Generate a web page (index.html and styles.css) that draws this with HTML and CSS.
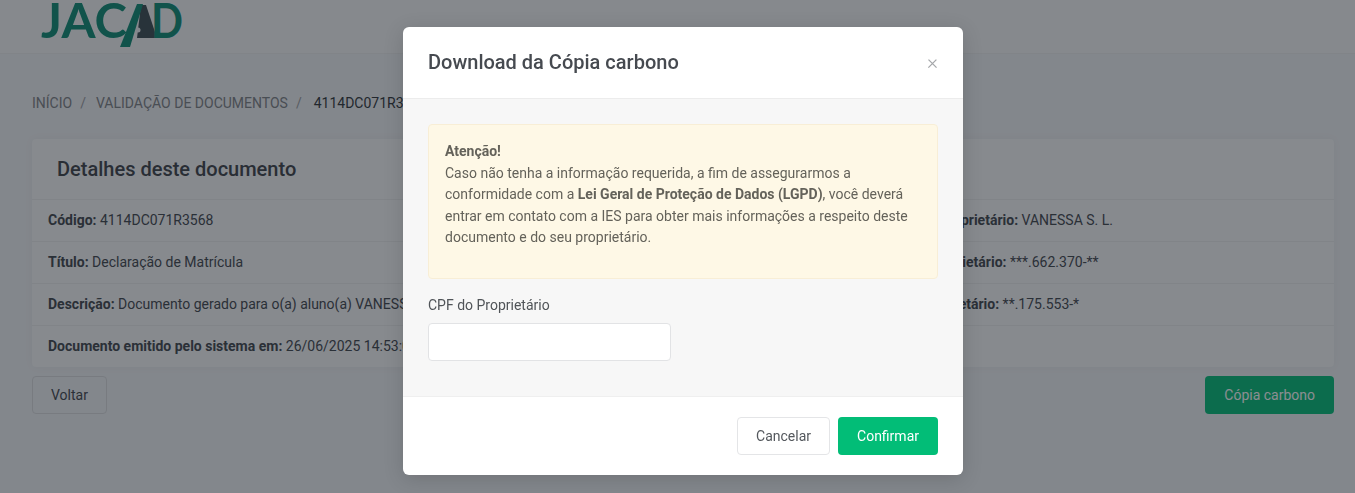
FILE: index.html
```html
<!DOCTYPE html>
<html lang="pt-BR">
<head>
    <meta charset="UTF-8">
    <meta name="viewport" content="width=device-width, initial-scale=1.0">
    <title>Validação de documentos</title>
    <link rel="stylesheet" href="styles.css">
</head>
<body>
    <header class="topbar">
        <svg class="logo" width="150" height="53" viewBox="0 0 150 53" role="img" aria-label="JACAD">
            <text class="logo-text" x="0" y="38" textLength="86" lengthAdjust="spacingAndGlyphs">JAC</text>
            <polygon class="logo-dark" points="100,5 105,5 116,38 96,38"/>
            <circle class="logo-dot" cx="97" cy="30" r="2.5"/>
            <polygon class="logo-green" points="96,4 102,4 89,47 79,47"/>
            <text class="logo-text" x="110" y="38" textLength="32" lengthAdjust="spacingAndGlyphs">D</text>
        </svg>
    </header>

    <main class="content">
        <nav class="breadcrumb">
            <a href="#">INÍCIO</a>
            <span class="sep">/</span>
            <a href="#">VALIDAÇÃO DE DOCUMENTOS</a>
            <span class="sep">/</span>
            <span class="current">4114DC071R3568</span>
        </nav>

        <section class="card">
            <h2 class="card-title">Detalhes deste documento</h2>
            <div class="row">
                <div><b>Código:</b> 4114DC071R3568</div>
                <div><b>Nome do proprietário:</b> VANESSA S. L.</div>
            </div>
            <div class="row">
                <div><b>Título:</b> Declaração de Matrícula</div>
                <div><b>CPF do proprietário:</b> ***.662.370-**</div>
            </div>
            <div class="row">
                <div><b>Descrição:</b> Documento gerado para o(a) aluno(a) VANESSA S. L.</div>
                <div><b>RG do proprietário:</b> **.175.553-*</div>
            </div>
            <div class="row">
                <div><b>Documento emitido pelo sistema em:</b> 26/06/2025 14:53:08</div>
            </div>
        </section>

        <div class="actions">
            <button class="btn btn-outline">Voltar</button>
            <button class="btn btn-dark-green">Cópia carbono</button>
        </div>
    </main>

    <div class="backdrop">
        <div class="modal">
            <div class="modal-header">
                <h3>Download da Cópia carbono</h3>
                <span class="close">&times;</span>
            </div>
            <div class="modal-body">
                <div class="alert">
                    <b>Atenção!</b><br>
                    Caso não tenha a informação requerida, a fim de assegurarmos a conformidade com a <b>Lei Geral de Proteção de Dados (LGPD)</b>, você deverá entrar em contato com a IES para obter mais informações a respeito deste documento e do seu proprietário.
                </div>
                <label class="field-label" for="cpf">CPF do Proprietário</label>
                <input class="field" type="text" id="cpf">
            </div>
            <div class="modal-footer">
                <button class="btn btn-cancel">Cancelar</button>
                <button class="btn btn-green">Confirmar</button>
            </div>
        </div>
    </div>
</body>
</html>
```

FILE: styles.css
```css
* {
    box-sizing: border-box;
}
html, body {
    height: 100%;
}
body {
    margin: 0;
    overflow: hidden;
    font-family: Roboto, "Liberation Sans", sans-serif;
    font-size: 14px;
    line-height: 21px;
    color: #3f444b;
    background-color: #f1f2f4;
}
.topbar {
    height: 54px;
    padding-left: 41px;
    background-color: #f6f6f7;
    border-bottom: 1px solid #eceded;
}
.logo {
    display: block;
}
.logo-text {
    font-family: Lato, sans-serif;
    font-size: 47px;
    font-weight: 700;
    fill: #0d8a72;
}
.logo-green {
    fill: #0d8a72;
}
.logo-dark {
    fill: #3b4b50;
}
.logo-dot {
    fill: #f1f2f4;
}
.content {
    padding: 39px 21px 0 32px;
}
.breadcrumb {
    display: flex;
    gap: 8px;
    height: 46px;
    white-space: nowrap;
}
.breadcrumb a {
    color: #7d8084;
    text-decoration: none;
}
.breadcrumb .sep {
    color: #9a9c9f;
    margin-right: 2px;
}
.breadcrumb .current {
    color: #2f3338;
    margin-left: 2px;
}
.card {
    background-color: #f8f8f9;
    border-radius: 4px;
    box-shadow: 0 0 10px rgba(0, 0, 0, 0.04);
}
.card-title {
    margin: 0;
    height: 60px;
    padding: 15px 25px;
    font-size: 20px;
    line-height: 30px;
    font-weight: 500;
    color: #3c4047;
}
.row {
    display: grid;
    grid-template-columns: 832px 1fr;
    height: 42px;
    padding: 10px 16px;
    border-top: 1px solid #eceded;
    white-space: nowrap;
}
.row b {
    font-weight: 700;
}
.actions {
    display: flex;
    justify-content: space-between;
    margin-top: 9px;
}
.btn {
    height: 38px;
    padding: 0 18px;
    font-family: inherit;
    font-size: 14px;
    border-radius: 4px;
    border: 1px solid transparent;
}
.btn-outline {
    background: transparent;
    border-color: #dadbdd;
    color: #3f444b;
}
.btn-dark-green {
    background-color: #02bd77;
    color: #ffffff;
}
.backdrop {
    position: fixed;
    inset: 0;
    padding: 27px 0 0 403px;
    background-color: rgba(22, 28, 36, 0.5);
}
.modal {
    width: 560px;
    height: 448px;
    display: flex;
    flex-direction: column;
    overflow: hidden;
    background-color: #ffffff;
    border-radius: 6px;
    box-shadow: 0 4px 20px rgba(0, 0, 0, 0.15);
}
.modal-header {
    display: flex;
    justify-content: space-between;
    align-items: center;
    height: 72px;
    padding: 0 25px;
    border-bottom: 1px solid #ececec;
}
.modal-header h3 {
    margin: 0;
    font-size: 20px;
    font-weight: 500;
    color: #464a50;
}
.close {
    font-size: 21px;
    font-weight: 300;
    color: #a4a6a9;
}
.modal-body {
    flex: 1;
    padding: 25px 25px 0;
    background-color: #f7f7f7;
    border-bottom: 1px solid #efefef;
    color: #5c5f63;
}
.alert {
    height: 155px;
    padding: 16px;
    margin-bottom: 16px;
    line-height: 21.5px;
    background-color: #fef8e6;
    border: 1px solid #f8eed6;
    border-radius: 4px;
    color: #64625a;
}
.field-label {
    display: block;
    margin-bottom: 7px;
    color: #505458;
}
.field {
    display: block;
    width: 243px;
    height: 38px;
    background-color: #ffffff;
    border: 1px solid #e2e3e5;
    border-radius: 4px;
}
.modal-footer {
    display: flex;
    justify-content: flex-end;
    gap: 8px;
    padding: 20px 25px;
}
.btn-cancel {
    background-color: #ffffff;
    border-color: #e4e5e7;
    color: #54585d;
}
.btn-green {
    background-color: #02bd77;
    color: #ffffff;
}
```
